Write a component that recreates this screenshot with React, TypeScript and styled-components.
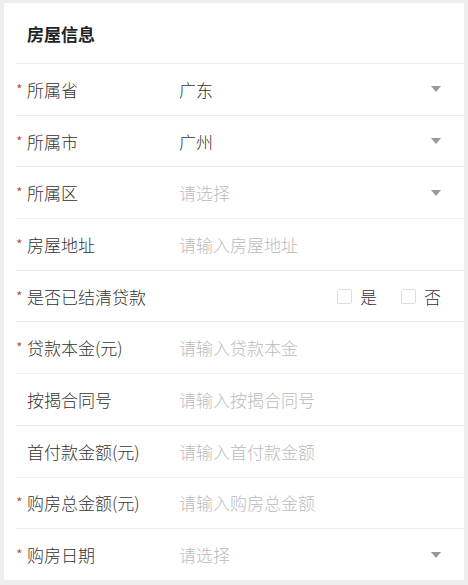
import styled, {createGlobalStyle} from "styled-components";

const GlobalStyle = createGlobalStyle`
    html, body {
        margin: 0;
        padding: 0;
        background: #eeeeee;
    }
    body {
        font-family: "Noto Sans CJK SC", "Noto Sans", sans-serif;
    }
`

const Page = styled.div`
    padding: 3px 4px 5px 4px;
`

const Card = styled.div`
    background: #ffffff;
`

const Title = styled.div`
    height: 60px;
    display: flex;
    align-items: center;
    padding-left: 23px;
    font-size: 17px;
    font-weight: 700;
    color: #222222;
`

const Row = styled.div`
    box-sizing: border-box;
    height: 51.7px;
    margin-left: 12px;
    padding-right: 23px;
    border-top: 1px solid #ececec;
    display: flex;
    align-items: center;
    font-size: 17px;
    font-weight: 300;
`

const Star = styled.span<{ $show: boolean }>`
    width: 11px;
    flex: none;
    color: #b23a4a;
    font-size: 15px;
    visibility: ${p => p.$show ? "visible" : "hidden"};
`

const Label = styled.span`
    width: 152px;
    flex: none;
    color: #333333;
`

const Value = styled.span<{ $placeholder?: boolean }>`
    flex: 1;
    color: ${p => p.$placeholder ? "#bbbbbb" : "#333333"};
`

const Arrow = styled.span`
    width: 0;
    height: 0;
    border-left: 5px solid transparent;
    border-right: 5px solid transparent;
    border-top: 6px solid #999999;
`

const Options = styled.div`
    display: flex;
    align-items: center;
    gap: 24px;
`

const Option = styled.label`
    display: flex;
    align-items: center;
    gap: 8px;
    color: #333333;
`

const Box = styled.span`
    width: 13px;
    height: 13px;
    border: 1px solid #dddddd;
    border-radius: 2px;
`

type Field = {
    label: string
    required: boolean
    value?: string
    placeholder?: string
    select?: boolean
    options?: string[]
}

const fields: Field[] = [
    {label: "所属省", required: true, value: "广东", select: true},
    {label: "所属市", required: true, value: "广州", select: true},
    {label: "所属区", required: true, placeholder: "请选择", select: true},
    {label: "房屋地址", required: true, placeholder: "请输入房屋地址"},
    {label: "是否已结清贷款", required: true, options: ["是", "否"]},
    {label: "贷款本金(元)", required: true, placeholder: "请输入贷款本金"},
    {label: "按揭合同号", required: false, placeholder: "请输入按揭合同号"},
    {label: "首付款金额(元)", required: false, placeholder: "请输入首付款金额"},
    {label: "购房总金额(元)", required: true, placeholder: "请输入购房总金额"},
    {label: "购房日期", required: true, placeholder: "请选择", select: true},
]

const App = () => {
    return (
        <Page>
            <GlobalStyle/>
            <Card>
                <Title>房屋信息</Title>
                {fields.map(f => (
                    <Row key={f.label}>
                        <Star $show={f.required}>*</Star>
                        <Label>{f.label}</Label>
                        {f.options ? (
                            <>
                                <Value/>
                                <Options>
                                    {f.options.map(o => (
                                        <Option key={o}><Box/>{o}</Option>
                                    ))}
                                </Options>
                            </>
                        ) : (
                            <Value $placeholder={!f.value}>{f.value || f.placeholder}</Value>
                        )}
                        {f.select && <Arrow/>}
                    </Row>
                ))}
            </Card>
        </Page>
    )
}

export default App
